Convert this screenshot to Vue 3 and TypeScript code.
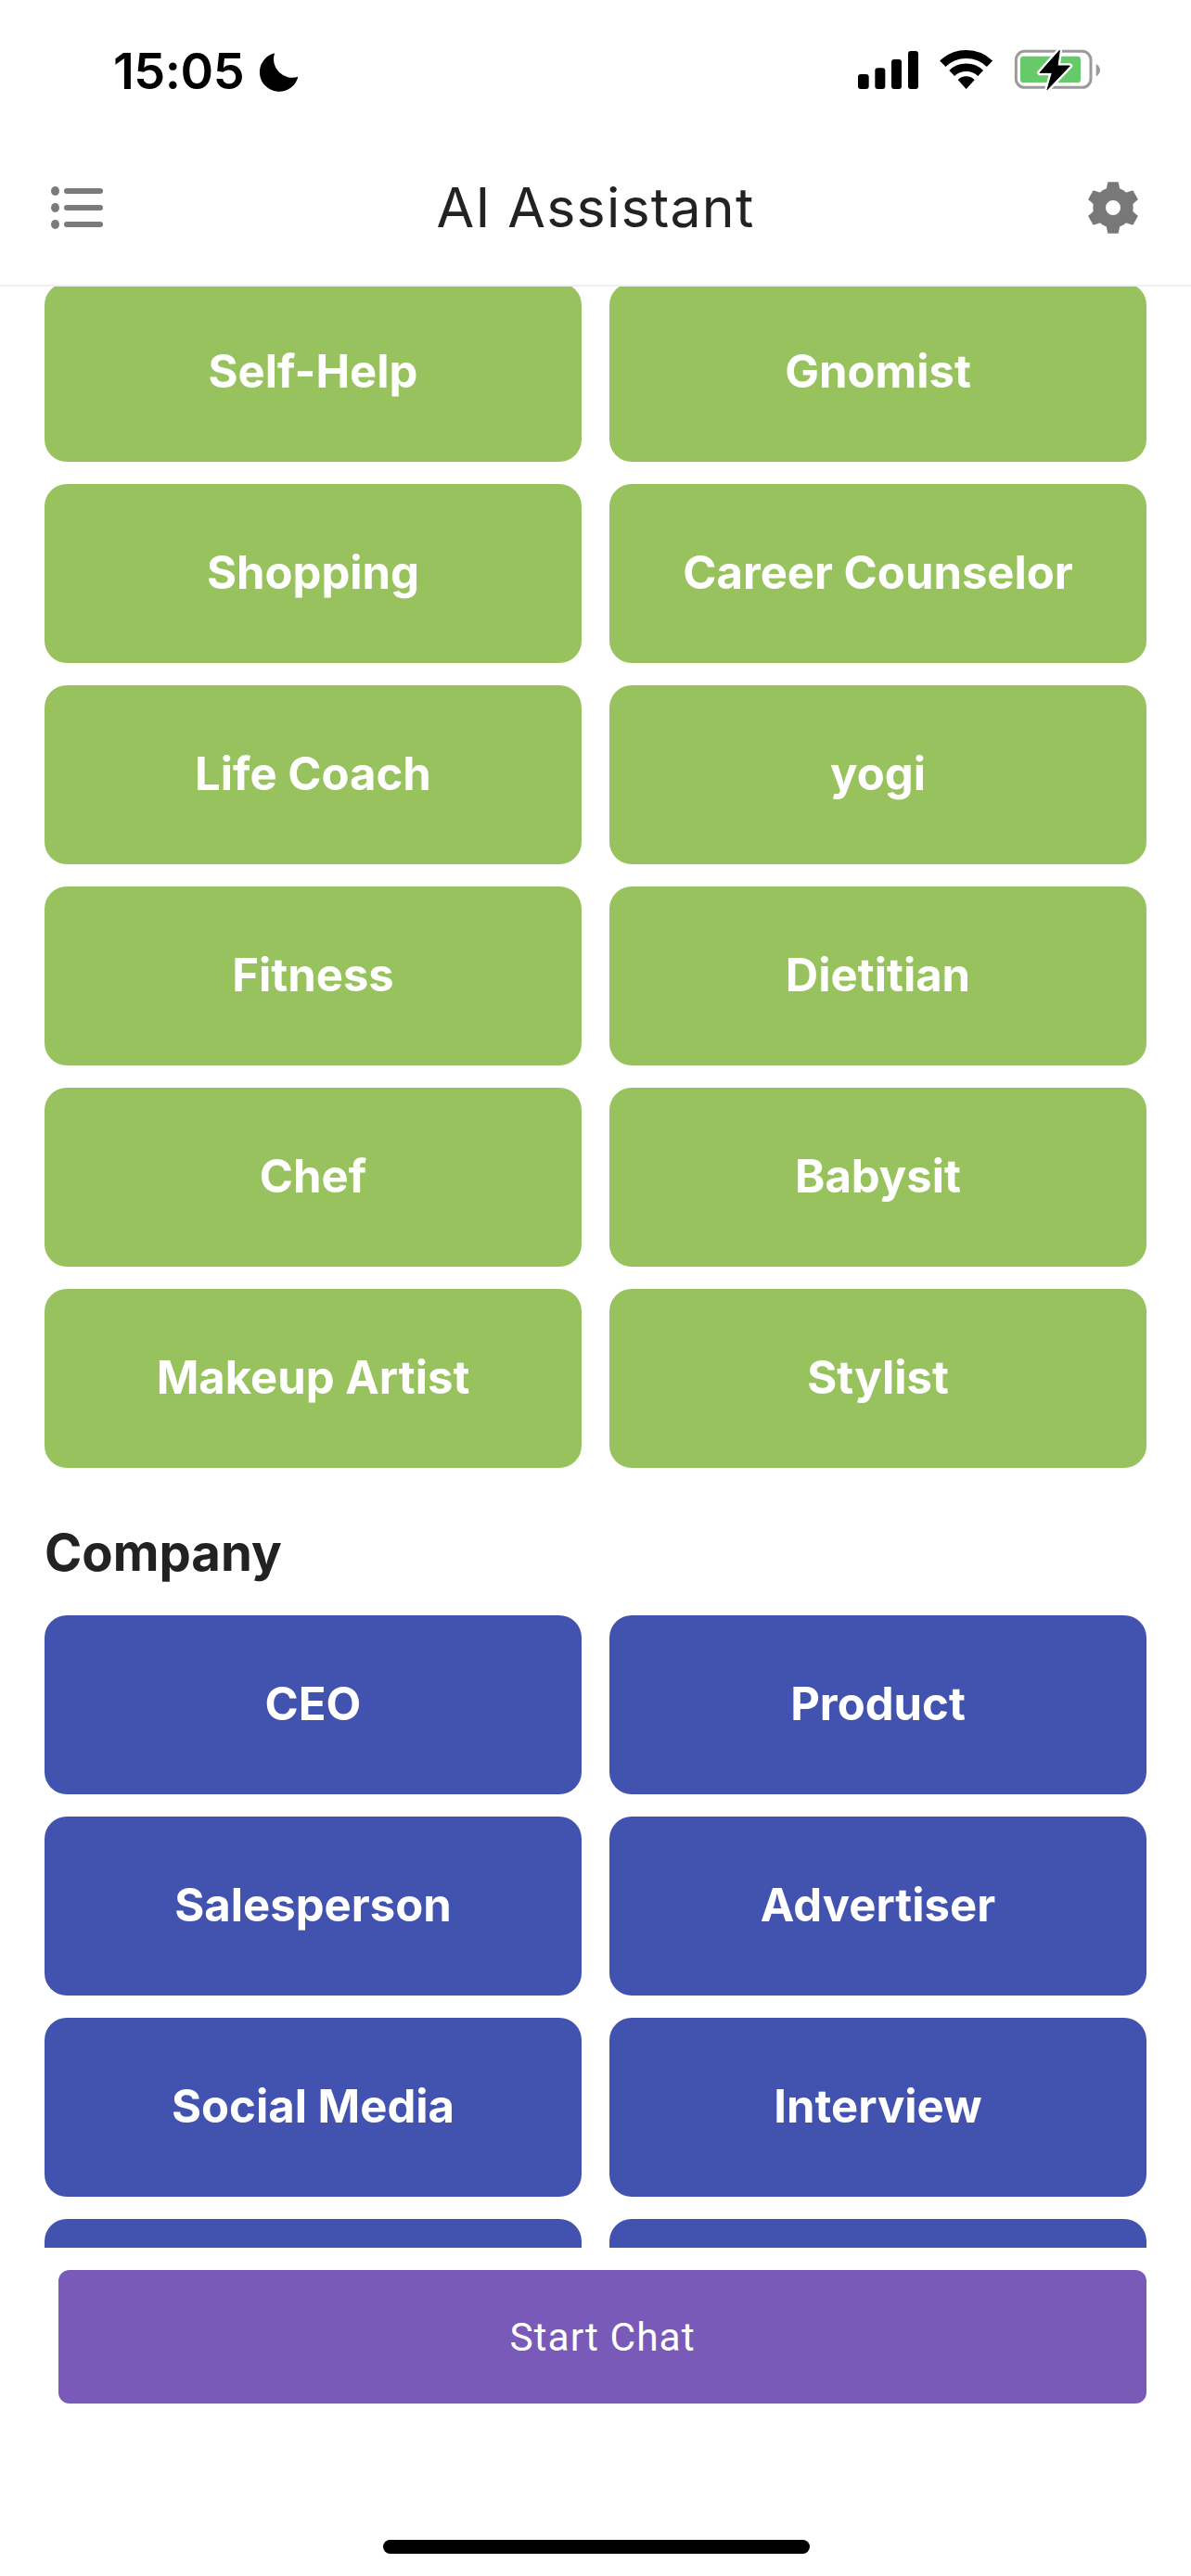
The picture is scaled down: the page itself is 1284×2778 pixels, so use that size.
<script setup lang="ts">
const lifeItems: string[] = [
  'Self-Help', 'Gnomist',
  'Shopping', 'Career Counselor',
  'Life Coach', 'yogi',
  'Fitness', 'Dietitian',
  'Chef', 'Babysit',
  'Makeup Artist', 'Stylist',
]

// last row is cut off by the footer, labels not visible
const companyItems: string[] = [
  'CEO', 'Product',
  'Salesperson', 'Advertiser',
  'Social Media', 'Interview',
  '', '',
]

const gearTeeth = [0, 60, 120, 180, 240, 300]
</script>

<template>
  <div class="page">
    <div class="status-bar">
      <div class="status-left">
        <span class="time">15:05</span>
        <svg class="moon" width="60" height="55" viewBox="0 0 180 165">
          <path d="M72 22A63 63 0 1 0 148 98A60 60 0 0 1 72 22Z" fill="#000" />
        </svg>
      </div>
      <div class="status-right">
        <svg width="165" height="60" viewBox="0 0 495 180">
          <rect x="30" y="105" width="35" height="48" rx="9" />
          <rect x="85" y="85" width="33" height="68" rx="9" />
          <rect x="138" y="57" width="33" height="96" rx="9" />
          <rect x="192" y="30" width="33" height="123" rx="9" />
          <path d="M304 71A109.5 109.5 0 0 1 456 71" fill="none" stroke="#000" stroke-width="27" />
          <path d="M333.500 102A67 67 0 0 1 426.500 102" fill="none" stroke="#000" stroke-width="25" />
          <path d="M354 123A38 38 0 0 1 406 123L380 152Z" stroke="#000" stroke-width="2" stroke-linejoin="round" />
        </svg>
        <svg class="battery" width="110" height="60" viewBox="0 0 330 180">
          <rect x="31" y="31" width="242" height="117" rx="28" fill="none" stroke="#9b9b9b" stroke-width="9" />
          <rect x="45" y="47" width="195" height="85" rx="10" fill="#66c96a" />
          <path d="M290 72C298 76 303 84 303 92C303 100 298 108 290 112Z" fill="#9b9b9b" />
          <path d="M172 28L108 100H148L132 155L205 78H165Z" fill="#000" stroke="#fff" stroke-width="17" stroke-linejoin="round" />
          <path d="M172 28L108 100H148L132 155L205 78H165Z" fill="#000" stroke="#000" stroke-width="3" stroke-linejoin="round" />
        </svg>
      </div>
    </div>

    <header class="nav">
      <svg class="nav-icon" width="56" height="46" viewBox="0 0 56 46">
        <ellipse cx="4.500" cy="5" rx="4.500" ry="5" />
        <ellipse cx="4.500" cy="23" rx="4.500" ry="5" />
        <ellipse cx="4.500" cy="41" rx="4.500" ry="5" />
        <rect x="14" y="2" width="42" height="6" rx="3" />
        <rect x="14" y="20" width="42" height="6" rx="3" />
        <rect x="14" y="38" width="42" height="6" rx="3" />
      </svg>
      <h1 class="title">AI Assistant</h1>
      <svg class="gear" width="80" height="80" viewBox="0 0 240 240">
        <circle cx="120" cy="120" r="44.500" fill="none" stroke="#787878" stroke-width="41" />
        <polygon
          v-for="deg in gearTeeth"
          :key="deg"
          :transform="`rotate(${deg} 120 120)`"
          points="105,39 135,39 142,75 98,75"
          fill="#787878"
          stroke="#787878"
          stroke-width="5"
          stroke-linejoin="round"
        />
      </svg>
    </header>

    <main class="list">
      <div class="list-inner">
        <div class="grid">
          <button v-for="item in lifeItems" :key="item" class="card card--green">{{ item }}</button>
        </div>
        <h2 class="section-title">Company</h2>
        <div class="grid">
          <button v-for="(item, i) in companyItems" :key="i" class="card card--blue">{{ item }}</button>
        </div>
      </div>
    </main>

    <footer class="footer">
      <button class="start-btn">Start Chat</button>
      <div class="home-bar"></div>
    </footer>
  </div>
</template>

<style>
html, body {
  margin: 0;
  background: #fff;
}
</style>

<style scoped>
.page {
  width: 1284px;
  height: 2778px;
  display: flex;
  flex-direction: column;
  overflow: hidden;
  background: #fff;
  font-family: Inter, "Liberation Sans", sans-serif;
}

.status-bar {
  height: 140px;
  flex: none;
  display: flex;
  justify-content: space-between;
  align-items: flex-start;
  padding: 45px 89px 0 122px;
  box-sizing: border-box;
}
.status-left {
  display: flex;
  align-items: center;
  height: 60px;
  margin-top: 2px;
}
.time {
  font-size: 54px;
  font-weight: 600;
  line-height: 60px;
  color: #000;
  letter-spacing: -0.5px;
}
.moon {
  margin: 0 0 0 9px;
}
.status-right {
  display: flex;
  height: 60px;
}
.status-right svg {
  display: block;
  flex: none;
}
.battery {
  margin-left: 5px;
}

.nav {
  height: 169px;
  flex: none;
  box-sizing: border-box;
  border-bottom: 2px solid #efefef;
  display: flex;
  align-items: center;
  justify-content: space-between;
  padding: 0 56px 0 55px;
  position: relative;
}
.nav-icon {
  fill: #7a7a7a;
  display: block;
}
.gear {
  display: block;
  margin-right: -12px;
}
.title {
  position: absolute;
  left: 0;
  right: 0;
  margin: 0;
  text-align: center;
  font-size: 59px;
  font-weight: 400;
  color: #222;
  letter-spacing: 1.2px;
}

.list {
  height: 2115px;
  flex: none;
  overflow: hidden;
}
.list-inner {
  margin-top: -4px;
  padding: 0 48px;
}
.grid {
  display: grid;
  grid-template-columns: 579px 579px;
  grid-auto-rows: 193px;
  gap: 24px 30px;
}
.card {
  border: none;
  border-radius: 24px;
  color: #fff;
  font-family: inherit;
  font-size: 49px;
  font-weight: 700;
  padding: 0 0 3px;
  text-align: center;
}
.card--green {
  background: #98c25e;
}
.card--blue {
  background: #4253af;
}
.section-title {
  margin: 0;
  height: 159px;
  box-sizing: border-box;
  padding-top: 58px;
  font-size: 54.500px;
  line-height: 66px;
  font-weight: 700;
  color: #222;
}

.footer {
  flex: 1;
  padding: 24px 48px 0 63px;
  display: flex;
  flex-direction: column;
}
.start-btn {
  height: 144px;
  flex: none;
  border: none;
  border-radius: 12px;
  background: #7a5ab8;
  color: #fff;
  font-family: Roboto, sans-serif;
  font-size: 42.500px;
  font-weight: 400;
  letter-spacing: 1px;
  padding: 0;
}
.home-bar {
  width: 460px;
  height: 15px;
  border-radius: 8px;
  background: #000;
  margin: 147px 0 0 350px;
}
</style>
